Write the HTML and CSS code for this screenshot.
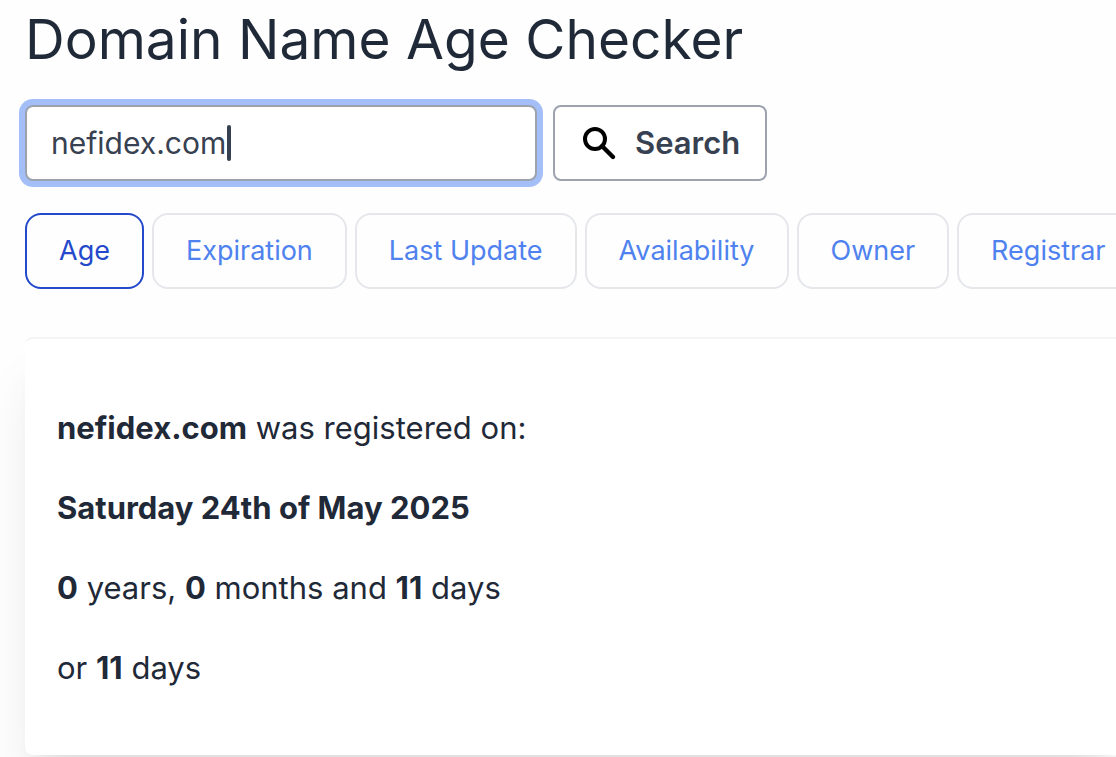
FILE: index.html
```html
<!DOCTYPE html>
<html lang="en">
<head>
    <meta charset="UTF-8">
    <meta name="viewport" content="width=device-width, initial-scale=1.0">
    <title>Domain Name Age Checker</title>
    <link rel="stylesheet" href="styles.css">
</head>
<body>

    <main class="page">
        <h1 class="page-title">Domain Name Age Checker</h1>

        <!-- Search form -->
        <form class="search-form">
            <div class="search-field">
                <input class="search-input" type="text" name="domain" value="nefidex.com" aria-label="Domain name" autocomplete="off" spellcheck="false">
                <div class="caret-layer" aria-hidden="true"><span class="caret"></span></div>
            </div>
            <button class="search-button" type="submit">
                <svg class="search-icon" viewBox="0 0 36 36" aria-hidden="true">
                    <circle cx="14" cy="14" r="10" fill="none" stroke="#000" stroke-width="4"/>
                    <path d="M21 21L32 32" fill="none" stroke="#000" stroke-width="4.4" stroke-linecap="round"/>
                </svg>
                Search
            </button>
        </form>

        <!-- Tabs -->
        <nav class="tabs">
            <a class="tab active" href="#age">Age</a>
            <a class="tab" href="#expiration">Expiration</a>
            <a class="tab" href="#last-update">Last Update</a>
            <a class="tab" href="#availability">Availability</a>
            <a class="tab" href="#owner">Owner</a>
            <a class="tab" href="#registrar">Registrar</a>
        </nav>

        <!-- Result -->
        <section class="result" id="age">
            <p><strong>nefidex.com</strong> was registered on:</p>
            <p><strong>Saturday 24th of May 2025</strong></p>
            <p><strong>0</strong> years, <strong>0</strong> months and <strong>11</strong> days</p>
            <p>or <strong>11</strong> days</p>
        </section>
    </main>

</body>
</html>
```

FILE: styles.css
```css
* {
    box-sizing: border-box;
}

body {
    margin: 0;
    overflow: hidden;
    background-color: #fefefe;
    color: #1f2937;
    font-family: Inter, "Liberation Sans", sans-serif;
    font-size: 31px;
    line-height: 48px;
}

.page {
    padding: 9px 0 32px 25px;
}

.page-title {
    margin: 0 0 36px;
    font-size: 55px;
    font-weight: 400;
    line-height: 60px;
}

.search-form {
    display: flex;
    gap: 16px;
    margin-bottom: 32px;
}

.search-field {
    position: relative;
    width: 512px;
}

.search-input {
    display: block;
    width: 100%;
    height: 76px;
    padding: 0 24px;
    border: 2px solid #9ca3af;
    border-radius: 8px;
    outline: none;
    box-shadow: 0 0 0 6px #a4bff8;
    background-color: #fff;
    color: #374151;
    font: inherit;
    font-size: 30px;
    caret-color: transparent;
}

/* Thick text cursor after the typed domain */
.caret-layer {
    position: absolute;
    top: 20px;
    left: 202px;
    pointer-events: none;
}

.caret {
    display: block;
    width: 4px;
    height: 36px;
    border-radius: 2px;
    background-color: #374151;
}

.search-button {
    display: flex;
    align-items: center;
    gap: 18px;
    height: 76px;
    padding: 0 25px 0 26px;
    border: 2px solid #9ca3af;
    border-radius: 8px;
    background-color: #fff;
    color: #374151;
    font: inherit;
    font-weight: 600;
    cursor: pointer;
}

.search-icon {
    width: 36px;
    height: 36px;
}

.tabs {
    display: flex;
    gap: 8px;
    margin-bottom: 48px;
}

.tab {
    flex: none;
    height: 76px;
    padding: 0 32px;
    border: 2px solid #e5e7eb;
    border-radius: 16px;
    color: #4f82ee;
    font-size: 27px;
    line-height: 72px;
    text-decoration: none;
}

.tab.active {
    border-color: #2549cb;
    color: #2549cb;
}

.result {
    padding: 65px 32px 63px;
    border-top: 2px solid #f3f4f6;
    border-radius: 8px 0 0 8px;
    background-color: #fff;
    box-shadow: 0 40px 50px -10px rgba(0, 0, 0, 0.1), 0 20px 20px -10px rgba(0, 0, 0, 0.04);
}

.result p {
    margin: 0 0 32px;
}

.result p:last-child {
    margin-bottom: 0;
}

.result strong {
    font-weight: 700;
}
```
